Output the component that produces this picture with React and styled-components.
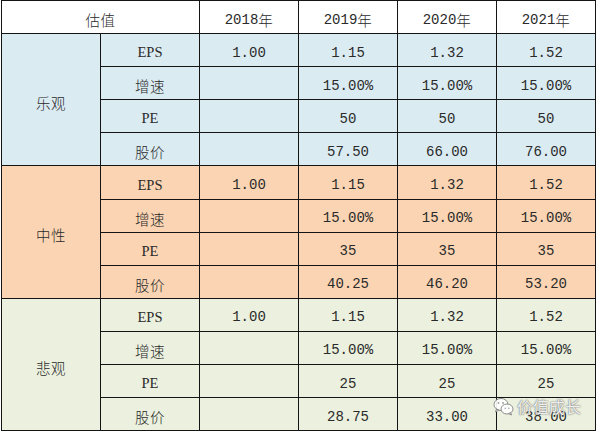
import React from 'react';
import styled, { createGlobalStyle } from 'styled-components';

const GlobalStyle = createGlobalStyle`
  html, body {
    margin: 0;
    padding: 0;
    background: #ffffff;
  }
  body {
    width: 597px;
    height: 432px;
    overflow: hidden;
  }
`;

const Page = styled.div`
  position: relative;
  width: 597px;
  height: 432px;
  padding-left: 1px;
  box-sizing: border-box;
`;

const Sheet = styled.div`
  display: grid;
  grid-template-columns: repeat(6, 98px);
  grid-auto-rows: 32.1px;
  gap: 1px;
  padding: 1px;
  width: max-content;
  background: #141414;
`;

const Cell = styled.div`
  display: flex;
  align-items: center;
  justify-content: center;
  padding-top: 5px;
  box-sizing: border-box;
  background: ${props => props.bg || '#ffffff'};
  color: #2a2a2a;
  font-family: ${props => props.serif
    ? '"Liberation Serif", "Noto Sans CJK SC", serif'
    : '"Liberation Mono", "Noto Sans CJK SC", monospace'};
  font-size: ${props => props.serif ? '14.5px' : '14px'};
  white-space: pre;
  grid-column: ${props => props.colSpan ? `span ${props.colSpan}` : 'auto'};
  grid-row: ${props => props.rowSpan ? `span ${props.rowSpan}` : 'auto'};
`;

const Cjk = styled.span`
  font-family: "Noto Sans CJK SC", sans-serif;
  font-size: 14.5px;
  font-weight: 300;
  letter-spacing: 0.5px;
`;

const Watermark = styled.div`
  position: absolute;
  left: 493px;
  top: 396px;
  display: flex;
  align-items: center;
  gap: 3px;
  color: rgba(255, 255, 255, 0.88);
  font-family: "Noto Sans CJK SC", sans-serif;
  font-size: 16px;
  line-height: 20px;
  text-shadow: 0 0 1px #6e6e6e, 0 0 2px #8a8a8a;
  pointer-events: none;
`;

const years = ['2018年', '2019年', '2020年', '2021年'];

const groups = [
  {
    name: '乐观',
    bg: '#dbebf2',
    rows: [
      ['EPS', '1.00', '1.15', '1.32', '1.52'],
      ['增速', '', '15.00%', '15.00%', '15.00%'],
      ['PE', '', '50', '50', '50'],
      ['股价', '', '57.50', '66.00', '76.00'],
    ],
  },
  {
    name: '中性',
    bg: '#fbd5b3',
    rows: [
      ['EPS', '1.00', '1.15', '1.32', '1.52'],
      ['增速', '', '15.00%', '15.00%', '15.00%'],
      ['PE', '', '35', '35', '35'],
      ['股价', '', '40.25', '46.20', '53.20'],
    ],
  },
  {
    name: '悲观',
    bg: '#ebf1de',
    rows: [
      ['EPS', '1.00', '1.15', '1.32', '1.52'],
      ['增速', '', '15.00%', '15.00%', '15.00%'],
      ['PE', '', '25', '25', '25'],
      ['股价', '', '28.75', '33.00', '38.00'],
    ],
  },
];

const isLatin = (s) => /^[A-Za-z]+$/.test(s);

// digits in mono, CJK glyphs in the CJK face
const renderText = (text) => {
  const parts = text.split(/([\u4e00-\u9fff]+)/).filter(Boolean);
  return parts.map((p, i) =>
    /[\u4e00-\u9fff]/.test(p) ? <Cjk key={i}>{p}</Cjk> : <span key={i}>{p}</span>
  );
};

const WeChatIcon = () => (
  <svg width="21" height="19" viewBox="0 0 21 19">
    <g fill="rgba(255,255,255,0.92)" stroke="#8c8c8c" strokeWidth="1">
      <ellipse cx="8" cy="7.5" rx="7" ry="6" />
      <path d="M3.5 12 L2.5 15 L6 13 Z" />
      <ellipse cx="14" cy="12" rx="6" ry="5" />
      <path d="M17.5 15.6 L18.6 18 L15.6 16.6 Z" />
    </g>
    <g fill="#9a9a9a">
      <circle cx="5.5" cy="6" r="0.9" />
      <circle cx="10" cy="6" r="0.9" />
      <circle cx="12.2" cy="11.3" r="0.7" />
      <circle cx="15.8" cy="11.3" r="0.7" />
    </g>
  </svg>
);

const App = () => (
  <Page>
    <GlobalStyle />
    <Sheet>
      <Cell colSpan={2}>{renderText('估值')}</Cell>
      {years.map(y => (
        <Cell key={y}>{renderText(y)}</Cell>
      ))}
      {groups.map(group => (
        <React.Fragment key={group.name}>
          <Cell bg={group.bg} rowSpan={4}>{renderText(group.name)}</Cell>
          {group.rows.map((row, ri) =>
            row.map((value, ci) => (
              <Cell
                key={`${group.name}-${ri}-${ci}`}
                bg={group.bg}
                serif={isLatin(value)}
              >
                {renderText(value)}
              </Cell>
            ))
          )}
        </React.Fragment>
      ))}
    </Sheet>
    <Watermark>
      <WeChatIcon />
      <span>价值成长</span>
    </Watermark>
  </Page>
);

export default App;
